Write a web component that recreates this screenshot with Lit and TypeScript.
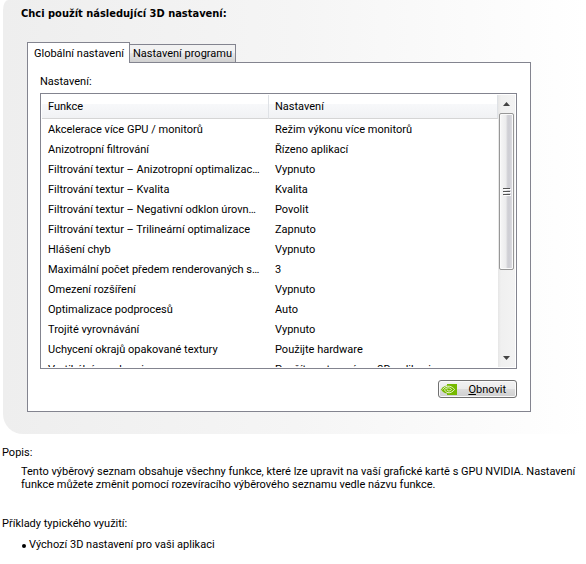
import { LitElement, html, css } from "lit";
import { customElement, state } from "lit/decorators.js";

const SETTINGS: [string, string][] = [
  ["Akcelerace více GPU / monitorů", "Režim výkonu více monitorů"],
  ["Anizotropní filtrování", "Řízeno aplikací"],
  ["Filtrování textur – Anizotropní optimalizac…", "Vypnuto"],
  ["Filtrování textur – Kvalita", "Kvalita"],
  ["Filtrování textur – Negativní odklon úrovn…", "Povolit"],
  ["Filtrování textur – Trilineární optimalizace", "Zapnuto"],
  ["Hlášení chyb", "Vypnuto"],
  ["Maximální počet předem renderovaných s…", "3"],
  ["Omezení rozšíření", "Vypnuto"],
  ["Optimalizace podprocesů", "Auto"],
  ["Trojité vyrovnávání", "Vypnuto"],
  ["Uchycení okrajů opakované textury", "Použijte hardware"],
  ["Vertikální synchronizace", "Použít nastavení pro 3D aplikaci"],
];

@customElement("settings-list")
export class SettingsList extends LitElement {
  static styles = css`
    :host {
      display: flex;
      box-sizing: border-box;
      height: 276px;
      padding: 1px;
      border: 1px solid #83848f;
      background: #fff;
    }
    .view {
      flex: 1;
      min-width: 0;
      overflow: hidden;
    }
    .table {
      width: 100%;
      table-layout: fixed;
      border-collapse: separate;
      border-spacing: 0;
    }
    .name {
      width: 227px;
    }
    .head {
      box-sizing: border-box;
      height: 24px;
      padding: 0 6px;
      text-align: left;
      font-weight: normal;
      border-bottom: 1px solid #d5d5d5;
      border-right: 1px solid #dfe2e6;
      background: linear-gradient(#fff 0 40%, #f7f8fa 40%, #f1f2f4);
    }
    .cell {
      height: 20px;
      padding: 0 0 0 6px;
      white-space: nowrap;
      overflow: hidden;
      text-overflow: ellipsis;
    }
    .bar {
      display: flex;
      flex-direction: column;
      width: 17px;
      background: linear-gradient(90deg, #e6e6e6, #f0f0f0 3px, #f3f3f3);
    }
    .arrow {
      height: 18px;
      padding: 0;
      border: 0;
      background: none;
      display: grid;
      place-items: center;
    }
    .thumb {
      display: grid;
      place-items: center;
      box-sizing: border-box;
      width: 15px;
      height: 157px;
      margin: 0 1px;
      border: 1px solid #979797;
      border-radius: 2px;
      background: linear-gradient(90deg, #f7f7f7, #ececed 45%, #cfcfd4 60%, #d0d0d6 75%, #e2e2e6);
      box-shadow: inset 0 0 0 1px #fafafa;
    }
    .space {
      flex: 1;
    }
  `;

  render() {
    return html`
      <div class="view">
        <table class="table" aria-label="Nastavení">
          <colgroup>
            <col class="name" />
            <col />
          </colgroup>
          <thead>
            <tr>
              <th class="head" scope="col">Funkce</th>
              <th class="head" scope="col">Nastavení</th>
            </tr>
          </thead>
          <tbody>
            ${SETTINGS.map(
              ([name, value]) => html`<tr>
                <td class="cell">${name}</td>
                <td class="cell">${value}</td>
              </tr>`
            )}
          </tbody>
        </table>
      </div>
      <div class="bar">
        <button class="arrow" aria-label="Nahoru">
          <svg width="7" height="4" viewBox="0 0 7 4"><path d="M3.5 0 7 4H0Z" fill="#444" /></svg>
        </button>
        <div class="thumb">
          <svg width="8" height="9" viewBox="0 0 8 9">
            <path d="M0 1.5H7M0 4.5H7M0 7.5H7" stroke="#555" />
            <path d="M1 2.5H8M1 5.5H8M1 8.5H8" stroke="#fff" />
          </svg>
        </div>
        <div class="space"></div>
        <button class="arrow" aria-label="Dolů">
          <svg width="7" height="4" viewBox="0 0 7 4"><path d="M0 0H7L3.5 4Z" fill="#444" /></svg>
        </button>
      </div>
    `;
  }
}

@customElement("app-root")
export class AppRoot extends LitElement {
  @state() private tab = 0;

  static styles = css`
    :host {
      display: block;
      color: #000;
      background: #fff;
      font: 11px/13px Roboto, sans-serif;
    }
    .panel {
      margin-left: 3px;
      padding: 7px 55px 22px 24px;
      border-radius: 5px 0 0 20px / 10px 0 0 20px;
      background: linear-gradient(90deg, #eee, #f5f5f5 50%, #fff);
    }
    .title {
      margin: 0 0 22px;
      font: bold 11px/13px "DejaVu Sans Condensed", sans-serif;
      text-indent: -6px;
    }
    .tabs {
      display: flex;
      align-items: flex-end;
    }
    .tab {
      box-sizing: border-box;
      height: 18px;
      padding: 0 3px;
      border: 1px solid #83848f;
      border-width: 1px 1px 0 0;
      font: inherit;
      color: inherit;
      white-space: nowrap;
      background: linear-gradient(#f2f2f2 45%, #e6e6e6 50%, #d0d0d0);
    }
    .tab.on {
      z-index: 1;
      height: 21px;
      padding: 0 5px 0 6px;
      margin-bottom: -1px;
      border-left-width: 1px;
      background: #fff;
    }
    .page {
      padding: 12px 13px 13px 12px;
      border: 1px solid #83848f;
      background: #fff;
    }
    .label {
      margin: 0 0 5px;
    }
    .actions {
      display: flex;
      justify-content: flex-end;
      margin-top: 11px;
    }
    .restore {
      display: flex;
      align-items: center;
      gap: 11px;
      box-sizing: border-box;
      height: 18px;
      padding: 0 10px 0 2px;
      border: 1px solid #707070;
      border-radius: 3px;
      font: inherit;
      color: inherit;
      background: linear-gradient(#f2f2f2, #ebebeb 50%, #dddddd 50%, #cfcfcf);
      box-shadow: inset 0 0 0 1px #fafafa;
    }
    .notes {
      padding: 12px 4px 12px 2px;
    }
    .heading {
      margin: 0;
      font-size: 11px;
      font-weight: normal;
    }
    .text {
      margin: 6px 0 26px 19px;
    }
    .uses {
      margin: 8px 0 0 20px;
      padding: 0;
      list-style: none;
    }
    .use {
      display: flex;
      align-items: center;
      gap: 3px;
    }
    .use::before {
      content: "";
      width: 4px;
      height: 4px;
      margin-top: 2px;
      border-radius: 50%;
      background: #000;
    }
  `;

  private tabButton(index: number, text: string) {
    return html`<button
      role="tab"
      class=${this.tab === index ? "tab on" : "tab"}
      aria-selected=${this.tab === index}
      @click=${() => (this.tab = index)}
    >${text}</button>`;
  }

  render() {
    return html`
      <section class="panel">
        <h1 class="title">Chci použít následující 3D nastavení:</h1>
        <div class="tabs" role="tablist">
          ${this.tabButton(0, "Globální nastavení")}${this.tabButton(1, "Nastavení programu")}
        </div>
        <div class="page" role="tabpanel">
          <p class="label">Nastavení:</p>
          <settings-list></settings-list>
          <div class="actions">
            <button class="restore">
              <svg width="16" height="11" viewBox="0 0 16 11" aria-hidden="true">
                <path d="M6 0H16V11H6Z" fill="#76b900" />
                <path d="M0 5.5C2 2.5 4 1.5 6.5 1.5V9.5C4 9.5 1.5 8 0 5.5Z" fill="#76b900" />
                <path d="M1.5 5.5C3.5 2.5 6 2 8.5 2.3C11 2.7 12.5 4 13.5 5.5C12 7.5 9.5 9.2 7 8.7C5 8.3 4 7 3.6 5.6C5 4 7 3.5 8.5 4C9.5 4.3 10.2 5 10.5 5.5C9.5 6.8 8 7.3 7 6.8C6.3 6.5 6 6 6 5.5" fill="none" stroke="#e9f5d0" />
              </svg>
              <span><u>O</u>bnovit</span>
            </button>
          </div>
        </div>
      </section>
      <section class="notes">
        <h2 class="heading">Popis:</h2>
        <p class="text">
          Tento výběrový seznam obsahuje všechny funkce, které lze upravit na vaší grafické kartě s GPU NVIDIA. Nastavení
          funkce můžete změnit pomocí rozevíracího výběrového seznamu vedle názvu funkce.
        </p>
        <h2 class="heading">Příklady typického využití:</h2>
        <ul class="uses">
          <li class="use">Výchozí 3D nastavení pro vaši aplikaci</li>
        </ul>
      </section>
    `;
  }
}
